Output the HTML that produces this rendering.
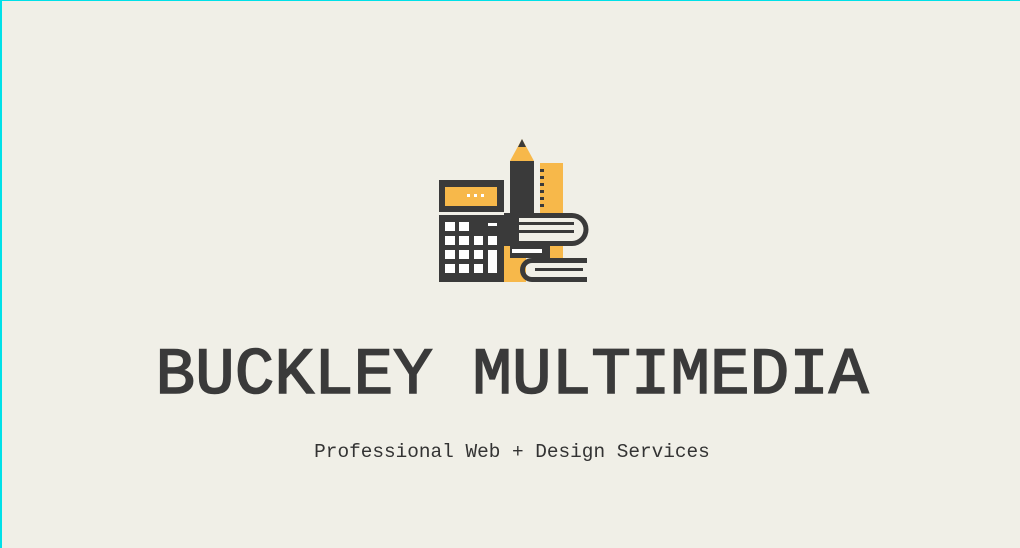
<!DOCTYPE html>
<html><head><meta charset="utf-8"><style>
html,body{margin:0;padding:0;}
body{width:1020px;height:548px;background:#f0efe7;position:relative;overflow:hidden;box-sizing:border-box;border-top:1px solid #00e0e8;border-left:2px solid #00e0e8;}
svg{position:absolute;left:430px;top:130px;}
.t{position:absolute;left:0;width:1020px;text-align:center;font-family:"Liberation Mono",monospace;color:#3a3a3a;white-space:nowrap;}
#h{top:337px;font-size:66px;font-weight:normal;-webkit-text-stroke:1.6px #3a3a3a;}
#s{top:440px;font-size:19.4px;color:#333;}
</style></head><body>
<svg width="165" height="160" viewBox="0 0 165 160">
 <rect x="108" y="32" width="23" height="96" fill="#f7b84a"/>
 <g fill="#3a3a3a"><rect x="108" y="38" width="4" height="3"/><rect x="108" y="45" width="4" height="3"/><rect x="108" y="52" width="4" height="3"/><rect x="108" y="59" width="4" height="3"/><rect x="108" y="66" width="4" height="3"/><rect x="108" y="73" width="4" height="3"/></g>
 <rect x="72" y="112" width="22" height="39" fill="#f7b84a"/>
 <polygon points="90,8 78,30 102,30" fill="#f7b84a"/>
 <polygon points="90,8 86,16 94,16" fill="#3a3a3a"/>
 <rect x="78" y="30" width="24" height="52" fill="#3a3a3a"/>
 <rect x="78" y="82" width="9" height="33" fill="#f7b84a"/>
 <path d="M72 82 H140 A16.5 16.5 0 0 1 140 115 H72 Z" fill="#3a3a3a"/>
 <path d="M87 87 H140 A11.5 11.5 0 0 1 140 110 H87 Z" fill="#f0efe7"/>
 <rect x="87" y="91" width="55" height="3" fill="#3a3a3a"/>
 <rect x="87" y="99" width="55" height="3" fill="#3a3a3a"/>
 <rect x="78" y="115" width="40" height="12" fill="#3a3a3a"/>
 <rect x="80" y="118" width="30" height="4" fill="#fff"/>
 <path d="M100 127 H155 V132 H100 A4.5 4.5 0 0 0 100 146 H155 V151 H100 A12 12 0 0 1 100 127 Z" fill="#3a3a3a"/>
 <rect x="103" y="137" width="48" height="3" fill="#3a3a3a"/>
 <rect x="7" y="49" width="65" height="32" fill="#3a3a3a"/>
 <rect x="7" y="84" width="65" height="67" fill="#3a3a3a"/>
 <rect x="13" y="56" width="52" height="19" fill="#f7b84a"/>
 <g fill="#fff">
  <rect x="35" y="63" width="3" height="3"/><rect x="42" y="63" width="3" height="3"/><rect x="49" y="63" width="3" height="3"/>
  <rect x="13" y="91" width="10" height="9"/><rect x="27" y="91" width="10" height="9"/><rect x="56" y="92" width="9" height="3"/>
  <rect x="13" y="105" width="10" height="9"/><rect x="27" y="105" width="10" height="9"/><rect x="42" y="105" width="9" height="9"/><rect x="56" y="105" width="9" height="9"/>
  <rect x="13" y="119" width="10" height="9"/><rect x="27" y="119" width="10" height="9"/><rect x="42" y="119" width="9" height="9"/><rect x="56" y="119" width="9" height="23"/>
  <rect x="13" y="133" width="10" height="9"/><rect x="27" y="133" width="10" height="9"/><rect x="42" y="133" width="9" height="9"/>
 </g>
</svg>
<div class="t" id="h">BUCKLEY MULTIMEDIA</div>
<div class="t" id="s">Professional Web + Design Services</div>
</body></html>
